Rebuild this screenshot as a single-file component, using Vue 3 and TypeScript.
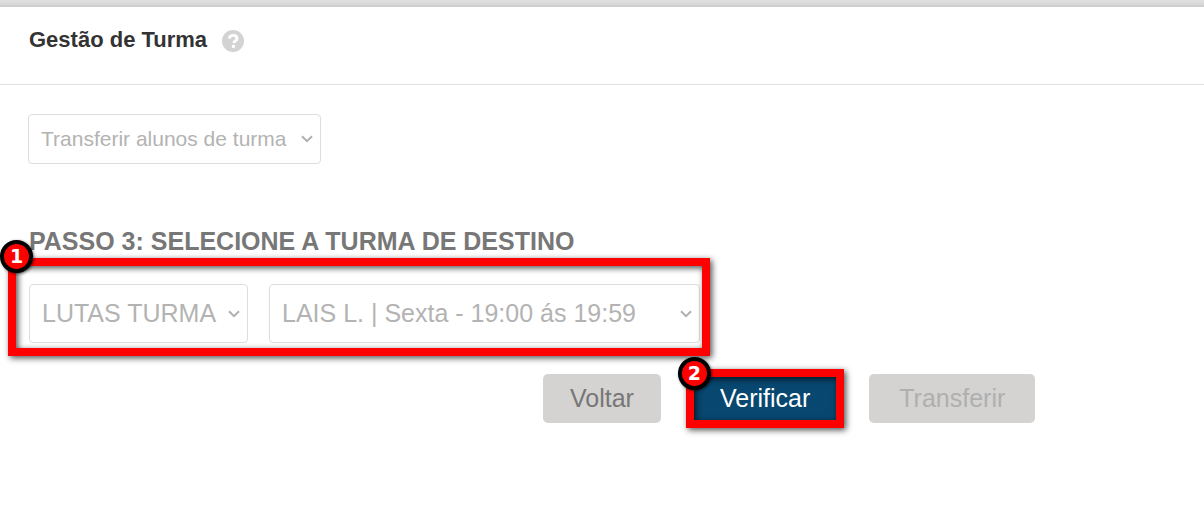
<script setup lang="ts">
import { ref } from 'vue'

const action = ref('Transferir alunos de turma')
const group = ref('LUTAS TURMA')
const schedule = ref('LAIS L. | Sexta - 19:00 ás 19:59')
</script>

<template>
  <div class="page">
    <div class="top-strip"></div>
    <header class="header">
      <h1 class="title">Gestão de Turma</h1>
      <button class="help" type="button" aria-label="Ajuda">
        <svg viewBox="0 0 22 22" width="22" height="22" aria-hidden="true">
          <circle cx="11" cy="11" r="11" fill="#d3d3d3" />
          <path d="M7.3 8.6C7.5 6.5 9 5.4 11.2 5.4c2.3 0 3.8 1.1 3.8 3 0 2.4-3.1 2.5-3.1 4.6" fill="none" stroke="#fff" stroke-width="2.9" />
          <rect x="9.9" y="14.8" width="3.1" height="3" fill="#fff" />
        </svg>
      </button>
    </header>

    <main class="content">
      <div class="select-box action">
        <select v-model="action" aria-label="Ação">
          <option>Transferir alunos de turma</option>
        </select>
        <svg class="chevron" viewBox="0 0 12 8" width="12" height="8" aria-hidden="true">
          <path d="M1 1.2 6 6.2 11 1.2" />
        </svg>
      </div>

      <h2 class="step">PASSO 3: SELECIONE A TURMA DE DESTINO</h2>

      <div class="targets">
        <div class="select-box large group">
          <select v-model="group" aria-label="Turma">
            <option>LUTAS TURMA</option>
          </select>
          <svg class="chevron" viewBox="0 0 12 8" width="12" height="8" aria-hidden="true">
            <path d="M1 1.2 6 6.2 11 1.2" />
          </svg>
        </div>
        <div class="select-box large schedule">
          <select v-model="schedule" aria-label="Horário">
            <option>LAIS L. | Sexta - 19:00 ás 19:59</option>
          </select>
          <svg class="chevron" viewBox="0 0 12 8" width="12" height="8" aria-hidden="true">
            <path d="M1 1.2 6 6.2 11 1.2" />
          </svg>
        </div>
        <div class="frame frame-targets"></div>
        <span class="badge badge-targets">1</span>
      </div>

      <div class="actions">
        <button class="btn" type="button">Voltar</button>
        <div class="marked">
          <button class="btn primary" type="button">Verificar</button>
          <div class="frame frame-verify"></div>
          <span class="badge badge-verify">2</span>
        </div>
        <button class="btn wide" type="button" disabled>Transferir</button>
      </div>
    </main>
  </div>
</template>

<style>
body {
  margin: 0;
  background: #fff;
}
</style>

<style scoped>
.page {
  font-family: "Liberation Sans", Arial, sans-serif;
  color: #777;
  overflow-x: hidden;
}
.top-strip {
  height: 7px;
  background: linear-gradient(#dfdfdf, #dadada 50%, #cacaca);
}
.header {
  display: flex;
  align-items: center;
  gap: 15px;
  height: 66px;
  padding: 0 29px 11px;
  border-bottom: 1px solid #e0e0e0;
}
.title {
  margin: 0;
  font-size: 22px;
  line-height: 26px;
  font-weight: 700;
  color: #333;
}
.help {
  display: flex;
  margin-top: 2px;
  padding: 0;
  border: 0;
  background: none;
}
.content {
  padding: 29px 28px;
}
.select-box {
  position: relative;
  box-sizing: border-box;
  height: 50px;
}
.select-box select {
  appearance: none;
  box-sizing: border-box;
  width: 100%;
  height: 100%;
  margin: 0;
  padding: 0 28px 2px 12px;
  border: 1px solid #ddd;
  border-radius: 4px;
  background: #fff;
  font-family: inherit;
  font-size: 21px;
  color: #b3b3b3;
}
.select-box.large {
  height: 59px;
}
.select-box.large select {
  font-size: 25px;
}
.action {
  width: 293px;
}
.group {
  width: 219px;
}
.schedule {
  width: 431px;
}
.chevron {
  position: absolute;
  top: 50%;
  right: 8px;
  margin-top: -4px;
  fill: none;
  stroke: #b0b0b0;
  stroke-width: 2;
  pointer-events: none;
}
.step {
  margin: 63px 0 28px 1px;
  font-size: 25px;
  line-height: 29px;
  font-weight: 700;
}
.targets {
  position: relative;
  display: flex;
  gap: 21px;
  width: fit-content;
  margin-left: 1px;
}
.frame {
  position: absolute;
  border: 8px solid #f00;
  filter: drop-shadow(2px 2px 3px rgba(0, 0, 0, 0.7));
  pointer-events: none;
}
.frame-targets {
  inset: -26px -10px -13px -21px;
}
.frame-verify {
  inset: -5px -7px;
}
.badge {
  position: absolute;
  box-sizing: border-box;
  width: 33px;
  height: 33px;
  border: 4px solid #000;
  border-radius: 50%;
  background: #f00;
  color: #fff;
  font-family: "DejaVu Sans", Verdana, sans-serif;
  font-size: 19px;
  line-height: 25px;
  font-weight: 700;
  text-align: center;
  box-shadow: 1px 1px 3px rgba(0, 0, 0, 0.6);
}
.badge-targets {
  top: -44px;
  left: -29px;
}
.badge-verify {
  top: -17px;
  left: -15px;
}
.actions {
  display: flex;
  gap: 32px;
  margin: 31px 0 0 515px;
}
.marked {
  position: relative;
}
.btn {
  height: 49px;
  padding: 0 27px;
  border: 0;
  border-radius: 5px;
  background: #d4d3d1;
  font-family: inherit;
  font-size: 25px;
  color: #777;
}
.btn.primary {
  background: #084770;
  color: #fff;
}
.btn.wide {
  padding: 0 30px;
}
.btn:disabled {
  color: #afafaf;
}
</style>
